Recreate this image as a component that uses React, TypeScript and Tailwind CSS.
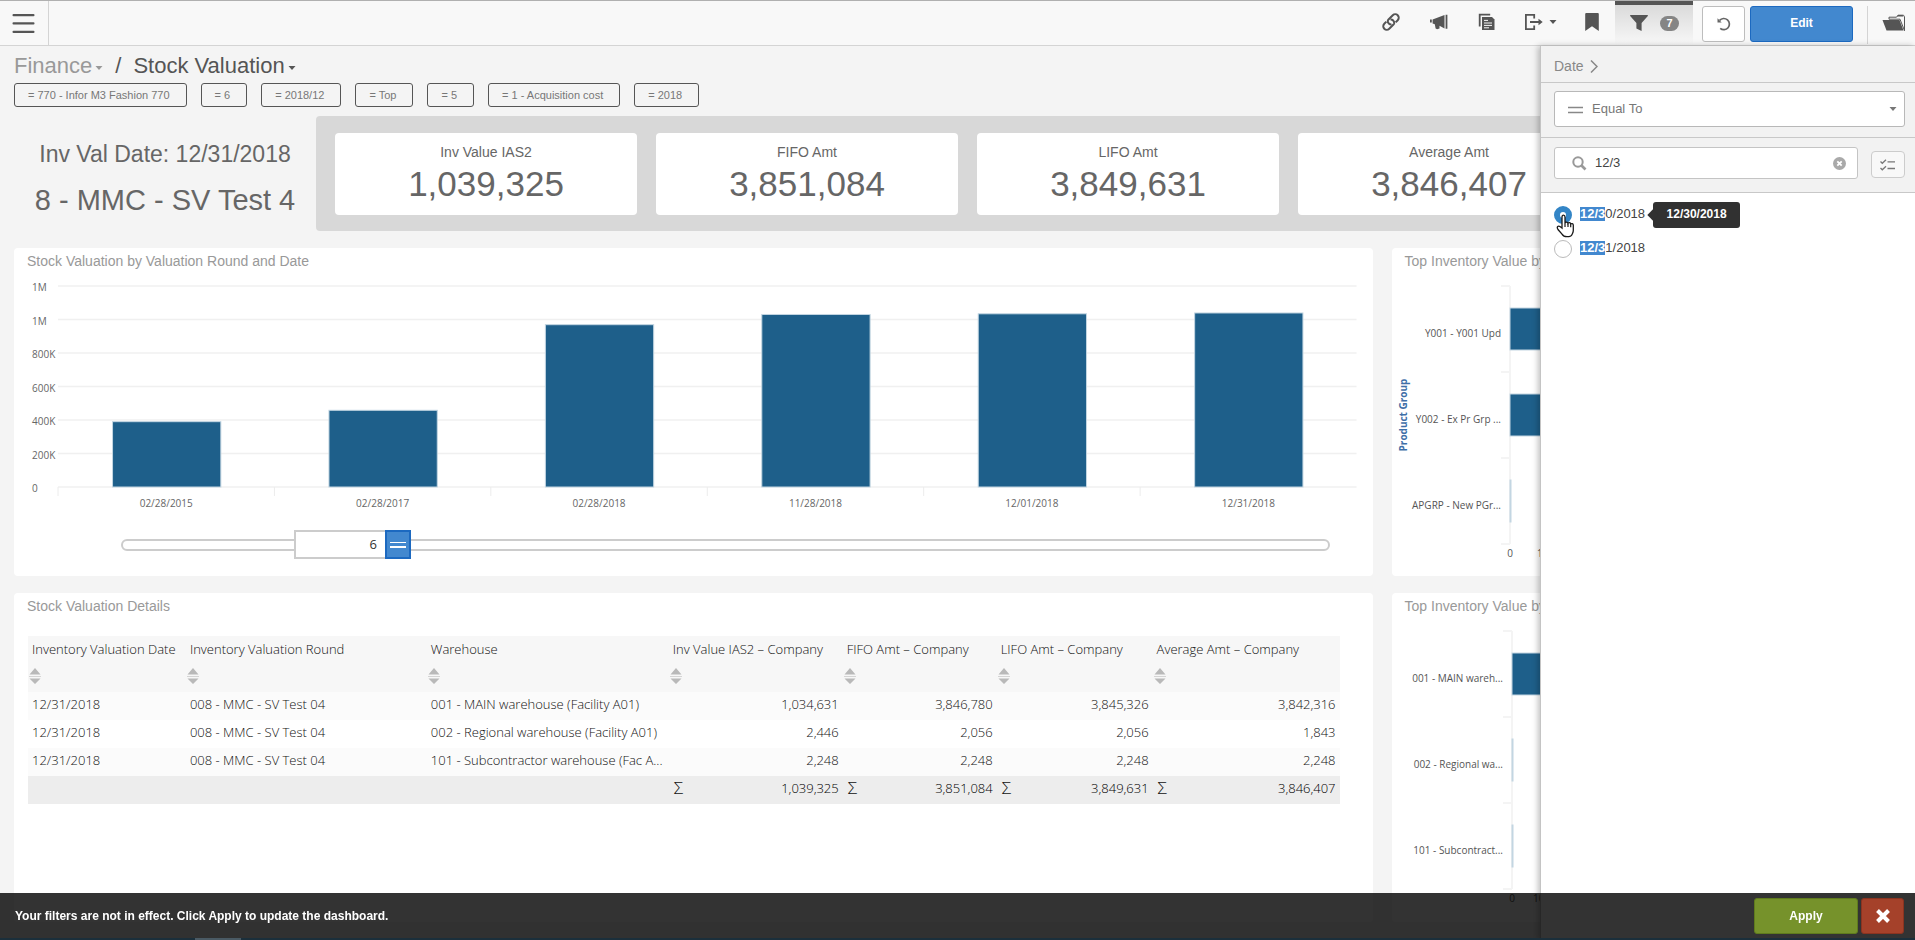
import { useState } from "react";

const filters = [
  "= 770 - Infor M3 Fashion 770",
  "= 6",
  "= 2018/12",
  "= Top",
  "= 5",
  "= 1 - Acquisition cost",
  "= 2018",
];

const kpis = [
  { label: "Inv Value IAS2", value: "1,039,325" },
  { label: "FIFO Amt", value: "3,851,084" },
  { label: "LIFO Amt", value: "3,849,631" },
  { label: "Average Amt", value: "3,846,407" },
];

const rounds = [
  { date: "02/28/2015", value: 390 },
  { date: "02/28/2017", value: 458 },
  { date: "02/28/2018", value: 969 },
  { date: "11/28/2018", value: 1030 },
  { date: "12/01/2018", value: 1034 },
  { date: "12/31/2018", value: 1039 },
];

const ticks = ["1M", "1M", "800K", "600K", "400K", "200K", "0"];

const columns = [
  { title: "Inventory Valuation Date", width: "w-[12.04%]" },
  { title: "Inventory Valuation Round", width: "w-[18.37%]" },
  { title: "Warehouse", width: "w-[18.45%]" },
  { title: "Inv Value IAS2 – Company", width: "w-[13.26%]" },
  { title: "FIFO Amt – Company", width: "w-[11.74%]" },
  { title: "LIFO Amt – Company", width: "w-[11.89%]" },
  { title: "Average Amt – Company", width: "w-[14.25%]" },
];

const rows = [
  ["12/31/2018", "008 - MMC - SV Test 04", "001 - MAIN warehouse (Facility A01)", "1,034,631", "3,846,780", "3,845,326", "3,842,316"],
  ["12/31/2018", "008 - MMC - SV Test 04", "002 - Regional warehouse (Facility A01)", "2,446", "2,056", "2,056", "1,843"],
  ["12/31/2018", "008 - MMC - SV Test 04", "101 - Subcontractor warehouse (Fac A...", "2,248", "2,248", "2,248", "2,248"],
];

const totals = ["1,039,325", "3,851,084", "3,849,631", "3,846,407"];

function Caret({ className = "" }: { className?: string }) {
  return (
    <svg width="8" height="4" viewBox="0 0 8 4" fill="currentColor" className={className}>
      <path d="M0.5 0h7L4 4z" />
    </svg>
  );
}

function Header() {
  return (
    <header className="flex h-[46px] items-stretch border-t border-b border-t-[#b0b0b0] border-b-[#d4d4d4] bg-[#f8f8f8] text-[#555]">
      <button type="button" aria-label="Menu" className="flex w-[49px] items-center border-r border-[#d4d4d4] pl-3">
        <svg width="23" height="21" fill="currentColor">
          <rect x="0.5" y="1" width="22" height="2.2" rx="1" />
          <rect x="0.5" y="9.3" width="22" height="2.2" rx="1" />
          <rect x="0.5" y="17.8" width="22" height="2.2" rx="1" />
        </svg>
      </button>

      <div className="ml-auto flex items-center pb-0.5">
        <button type="button" aria-label="Copy link" className="mr-7">
          <svg width="20" height="20" viewBox="0 0 20 20" fill="none" stroke="currentColor" strokeWidth="2">
            <g transform="rotate(-45 10 10)">
              <path d="M8.6 12.2A3.400 3.400 0 0 1 8.600 6.900Q9.300 6.500 10 6.500h6a3.500 3.500 0 0 1 0 7h-3" />
              <path d="M11.400 7.800a3.400 3.400 0 0 1 0 5.300Q10.700 13.500 10 13.500H4a3.500 3.500 0 0 1 0-7h3" />
            </g>
          </svg>
        </button>
        <button type="button" aria-label="Announce" className="mr-7">
          <svg width="20" height="20" viewBox="0 0 20 20" fill="currentColor">
            <path d="M1 7.5h1.800v3H1zM3.600 7.600L15.500 3v13.400l-5-2.600v2.600l-2.400.8-1.500-.8-.8-4.200-2.200-.7zM16.600 2.700h1.800v14h-1.800z" />
          </svg>
        </button>
        <button type="button" aria-label="Copy" className="mr-6">
          <svg width="20" height="20" viewBox="0 0 20 20">
            <path d="M2.700 14.500V2.700h10.500" fill="none" stroke="currentColor" strokeWidth="1.8" />
            <path d="M5 5h10l2.500 2.500V18H5z" fill="currentColor" />
            <path d="M7 8.400h4M7 11h8M7 13.400h8M7 15.800h5" stroke="#f8f8f8" strokeWidth="1" />
          </svg>
        </button>
        <button type="button" aria-label="Export" className="mr-7 flex items-center gap-1">
          <svg width="24" height="20" viewBox="0 0 24 20" fill="none" stroke="currentColor" strokeWidth="1.8">
            <path d="M13.200 6.500V2.900H4.900v14.200h8.300v-3.600M9 10h10" />
            <path d="M17.500 6.700l4.200 3.300-4.200 3.300z" fill="currentColor" stroke="none" />
          </svg>
          <Caret />
        </button>
        <button type="button" aria-label="Bookmark" className="mr-4">
          <svg width="14" height="18" fill="currentColor">
            <path d="M1.200 0h11.600q1 0 1 1v17L7 13.200 0.200 18V1q0-1 1-1z" />
          </svg>
        </button>
      </div>

      <button type="button" aria-label="Filters" className="flex w-[78px] items-center border-t-4 border-[#555] bg-linear-to-b from-[#dadada] to-[#f8f8f8] pb-1 pl-[15px]">
        <svg width="18" height="16" fill="currentColor">
          <path d="M0.400 0h17.200q.6.6 0 1.300L11.600 8v8L6.400 13.600V8L.4 1.300q-.6-.7 0-1.300z" />
        </svg>
        <span className="ml-3 h-[15px] w-[19px] rounded-full bg-[#858585] text-center text-[11px] leading-[15px] font-bold text-white">7</span>
      </button>
      <button type="button" aria-label="Undo" className="ml-[9px] mt-[5px] flex h-9 w-[43px] items-center justify-center rounded-[3px] border border-[#bdbdbd] bg-white">
        <svg width="14" height="14" viewBox="0 0 14 14" fill="none" stroke="#666" strokeWidth="1.7">
          <path d="M2.600 3.400A5.600 5.600 0 1 1 3.200 11.400" />
          <path d="M0.500 1.200v4.200h4.200z" fill="#666" stroke="none" />
        </svg>
      </button>
      <button type="button" className="ml-[5px] mt-[5px] h-9 w-[103px] rounded-[3px] border border-[#1c69c0] bg-[#4288cf] pb-0.5 text-[12px] font-bold text-white">
        Edit
      </button>
      <div className="ml-[14px] mt-[5px] h-[38px] border-l border-[#d4d4d4]" />
      <button type="button" aria-label="Open folder" className="ml-[14px] mr-[9px]">
        <svg width="24" height="18" viewBox="0 0 24 18" fill="currentColor">
          <path d="M0.500 6h17l4 10.500H4.500z" />
          <path d="M7 5.200V3.200h7.500l1.500-2h5.500l1 1.500v14l-4.500-11.500z" fill="none" stroke="currentColor" strokeWidth="1" />
          <path d="M15 2.600l1-1.700h4.500l1 1.700z" />
        </svg>
      </button>
    </header>
  );
}

function RoundsChart() {
  const [count, setCount] = useState("6");
  const step = 33.5;

  return (
    <section className="rounded bg-white pt-[3px] pb-[17px]">
      <h2 className="pl-[13px] text-[14px] leading-5 text-[#999]">Stock Valuation by Valuation Round and Date</h2>
      <div className="mr-4 ml-11">
        <svg width="100%" height="240" className="block overflow-visible font-['Open_Sans',sans-serif] text-[10px]" fill="#666">
          {ticks.map((t, i) => (
            <g key={i}>
              <line x1="0" x2="100%" y1={15 + i * step} y2={15 + i * step} stroke="#f0f0f0" strokeWidth="1.3" />
              <text x="-26" y={20 + i * step}>{t}</text>
            </g>
          ))}
          {rounds.map((r, i) => {
            const h = (r.value / 200) * step;
            return (
              <g key={r.date}>
                <line x1={`${(i * 100) / 6}%`} x2={`${(i * 100) / 6}%`} y1="216" y2="225" stroke="#ececec" />
                <rect x={`${(i * 100) / 6 + 4.2}%`} width="8.34%" y={216 - h} height={h} fill="#1e5f8a" stroke="#c3d6e2" strokeWidth="1" />
                <text x={`${((i + 0.5) * 100) / 6}%`} y="236" textAnchor="middle">{r.date}</text>
              </g>
            );
          })}
        </svg>
      </div>
      <div className="relative mt-[19px] mr-[43px] ml-[107px] flex h-[29px] items-center">
        <input
          type="range"
          aria-label="Number of rounds"
          min="1"
          max="30"
          value={Number(count) || 1}
          onChange={(e) => setCount(e.target.value)}
          className="h-3 w-full appearance-none rounded-full border-2 border-[#ccc] bg-white [&::-webkit-slider-thumb]:appearance-none"
        />
        <div className="absolute top-0 left-[14.3%] flex h-[29px]">
          <input
            type="text"
            aria-label="Rounds shown"
            value={count}
            onChange={(e) => setCount(e.target.value)}
            className="w-[91px] border-2 border-r-0 border-[#ccc] bg-white pr-2 text-right font-['Open_Sans',sans-serif] text-[13px] text-[#333]"
          />
          <button type="button" aria-label="Drag" className="flex w-[26px] flex-col items-center justify-center gap-[3px] border-2 border-[#1c69c0] bg-[#4288cf]">
            <span className="h-px w-4 bg-white" />
            <span className="h-0.5 w-4 bg-white" />
          </button>
        </div>
      </div>
    </section>
  );
}

interface TopChartProps {
  labels: string[];
  bars: string[];
  axis: number;
  next: string;
  nextX: number;
  legend?: string;
}

function TopChart({ labels, bars, axis, next, nextX, legend }: TopChartProps) {
  return (
    <section className="overflow-hidden rounded bg-white pt-[3px]">
      <h2 className="truncate pl-[13px] text-[14px] leading-5 text-[#999]">Top Inventory Value by {legend ?? "Warehouse"}</h2>
      <svg width="100%" height="300" className="block font-['Open_Sans',sans-serif] text-[10px]" fill="#555">
        <line x1={axis} x2={axis} y1="15" y2="273" stroke="#f4f4f4" strokeWidth="2" />
        {[15, 101, 187, 273].map((y) => (
          <line key={y} x1={axis - 9} x2={axis} y1={y} y2={y} stroke="#f4f4f4" strokeWidth="2" />
        ))}
        {labels.map((label, i) => (
          <g key={label}>
            <rect x={axis} y={37 + i * 86} width={bars[i]} height="42" fill="#1e5f8a" stroke="#c3d6e2" />
            <text x={axis - 9} y={66 + i * 86} textAnchor="end">{label}</text>
          </g>
        ))}
        <text x={axis} y="286" textAnchor="middle">0</text>
        <text x={nextX} y="286">{next}</text>
        {legend && (
          <text transform="translate(15 144) rotate(-90)" textAnchor="middle" fontWeight="700" fill="#3f6fa8">
            {legend}
          </text>
        )}
      </svg>
    </section>
  );
}

function DetailsTable() {
  return (
    <section className="rounded bg-white pt-[3px]">
      <h2 className="pl-[13px] text-[14px] leading-5 text-[#999]">Stock Valuation Details</h2>
      <div className="mt-5 mr-[33px] ml-[14px]">
        <table className="w-full table-fixed border-collapse font-['Open_Sans',sans-serif] text-[13px] text-[#111]">
          <thead>
            <tr className="h-14 bg-[#f7f7f7] text-left align-top">
              {columns.map((c) => (
                <th key={c.title} scope="col" className={`${c.width} p-0 pt-[3px] font-light whitespace-nowrap`}>
                  <span className="block pl-1 leading-5">{c.title}</span>
                  <button type="button" aria-label={`Sort by ${c.title}`} className="mt-2 ml-px block">
                    <svg width="12" height="18" fill="#b9b9b9">
                      <path d="M6 1l5.500 6.500H0.500zM0.500 11.500h11L6 17z" />
                      <path d="M0 9h12v1H0z" fill="#d4d4d4" />
                    </svg>
                  </button>
                </th>
              ))}
            </tr>
          </thead>
          <tbody>
            {rows.map((row, r) => (
              <tr key={r} className="h-7 odd:bg-[#fbfbfb]">
                {row.map((cell, i) => (
                  <td key={i} className={`pt-0 pb-1 pl-1 align-top leading-6 font-light whitespace-nowrap ${i > 2 ? "pr-1 text-right" : ""}`}>
                    {cell}
                  </td>
                ))}
              </tr>
            ))}
          </tbody>
          <tfoot>
            <tr className="h-7 bg-[#ededed]">
              <td colSpan={3} />
              {totals.map((t) => (
                <td key={t} className="pt-0 pr-1 pb-1 pl-[5px] align-top leading-6">
                  <div className="flex justify-between">
                    <span className="text-[17px] font-light">Σ</span>
                    <span className="font-light text-black">{t}</span>
                  </div>
                </td>
              ))}
            </tr>
          </tfoot>
        </table>
      </div>
    </section>
  );
}

function FilterPanel() {
  const [search, setSearch] = useState("12/3");
  const [selected, setSelected] = useState("0/2018");

  return (
    <aside className="absolute top-[46px] right-0 bottom-0 w-[375px] border-l border-[#c4c4c4] bg-white text-[13px] shadow-[-2px_0_6px_rgba(0,0,0,0.25)]">
      <div className="bg-[#f2f2f2]">
        <div className="flex h-[37px] items-center gap-1.5 border-b border-[#c8c8c8] pt-1 pl-[13px] text-[14px] text-[#888]">
          <a href="#date">Date</a>
          <svg width="8" height="13" fill="none" stroke="currentColor" strokeWidth="1.5">
            <path d="M1 0.500l6 6-6 6" />
          </svg>
        </div>
        <div className="border-b border-[#c8c8c8] pt-2 pr-[10px] pb-[10px] pl-[13px]">
          <div className="relative">
            <select aria-label="Operator" className="h-9 w-full appearance-none rounded-[3px] border border-[#b8b8b8] bg-white pl-[37px] text-[#777]">
              <option>Equal To</option>
              <option>Not Equal To</option>
            </select>
            <svg width="15" height="8" className="pointer-events-none absolute top-[15px] left-[14px]" stroke="#888" strokeWidth="1.6">
              <path d="M0 1.500h15M0 6.500h15" />
            </svg>
            <Caret className="pointer-events-none absolute top-4 right-2 text-[#777]" />
          </div>
        </div>
        <div className="flex h-[55px] items-start border-b border-[#c8c8c8] pt-[9px] pr-[10px] pl-[13px]">
          <div className="flex h-8 flex-1 items-center rounded-[3px] border border-[#c4c4c4] bg-white pr-[11px] pl-[17px]">
            <svg width="15" height="15" fill="none" stroke="#999">
              <circle cx="6" cy="6" r="4.700" strokeWidth="2" />
              <path d="M9.500 9.500l4 4" strokeWidth="2.600" />
            </svg>
            <input
              type="text"
              aria-label="Search values"
              value={search}
              onChange={(e) => setSearch(e.target.value)}
              className="ml-2 min-w-0 flex-1 text-[#444] outline-none"
            />
            <button type="button" aria-label="Clear search" onClick={() => setSearch("")}>
              <svg width="13" height="13" viewBox="0 0 13 13">
                <circle cx="6.500" cy="6.500" r="6.500" fill="#a9a9a9" />
                <path d="M4.300 4.300l4.400 4.400M8.700 4.300l-4.400 4.400" stroke="#fff" strokeWidth="1.800" />
              </svg>
            </button>
          </div>
          <button type="button" aria-label="Select mode" className="mt-1 ml-[13px] flex h-[27px] w-[34px] items-center justify-center rounded-sm border border-[#ccc] bg-[#f8f8f8]">
            <svg width="16" height="12" fill="none" stroke="#777" strokeWidth="1.300">
              <path d="M0.500 2.500l1.800 1.800L6 0.800M0.500 9l1.800 1.800L6 7.300M7.500 2.800H15M7.500 9.500H15" />
            </svg>
          </button>
        </div>
      </div>

      <div className="relative flex flex-col gap-4 pt-[13px] pl-[13px]">
        {["0/2018", "1/2018"].map((rest) => (
          <div key={rest} className="flex h-[18px] items-center">
            <label className="flex items-center gap-2 text-[#444]">
              <input
                type="radio"
                name="date"
                checked={selected === rest}
                onChange={() => setSelected(rest)}
                className="h-[18px] w-[18px] appearance-none rounded-full border border-[#bbb] bg-white checked:border-6 checked:border-[#3385c6]"
              />
              <span className="pb-0.5 leading-[14px]">
                <span className="inline-block bg-[#4288cf] font-bold text-white">12/3</span>
                {rest}
              </span>
            </label>
            {rest === "0/2018" && (
              <span role="tooltip" className="relative ml-2 h-[26px] w-[87px] rounded-[3px] bg-[#313131] text-center text-[12px] leading-[25px] font-bold text-white">
                <span className="absolute top-[9px] -left-1 h-2 w-2 rotate-45 bg-[#313131]" />
                12/30/2018
              </span>
            )}
          </div>
        ))}
        {/* hand pointer over the first option */}
        <svg width="19" height="24" viewBox="0 0 19 24" className="pointer-events-none absolute top-[21px] left-[15px]">
          <path
            d="M6 14V3.200C6 1.900 6.700 1.200 7.500 1.200S9 1.900 9 3.200V9c.3-1.200 2.700-1.200 3 .3.500-1 2.500-.8 2.700.7.700-.8 2.600-.4 2.600 1.300v5.200c0 2-.8 2.800-1.400 4.200-.6 1.500-2 2-4.900 2-2.700 0-4-.8-5-2.600L2 15.500c-.8-1.300-1.200-2.200-.3-3 1-.9 2.200-.4 4.300 1.500z"
            fill="#fff"
            stroke="#1a1a1a"
            strokeWidth="1.300"
          />
          <path d="M9 9v4M12 9.500v3.500M14.700 10.200v3" stroke="#1a1a1a" strokeWidth="1.200" />
        </svg>
      </div>
    </aside>
  );
}

function ApplyBar() {
  return (
    <footer className="fixed inset-x-0 bottom-0">
      <div className="flex h-[45px] items-center bg-black/80 pr-[11px] pl-[15px] text-[12px] font-bold text-white">
        <p>Your filters are not in effect. Click Apply to update the dashboard.</p>
        <button type="button" className="ml-auto h-9 w-[104px] rounded-[3px] border border-[#5f7b1d] bg-[#76922b]">
          Apply
        </button>
        <button type="button" aria-label="Dismiss" className="ml-[3px] flex h-9 w-[43px] items-center justify-center rounded-[3px] border border-[#8b3320] bg-[#a5412a]">
          <svg width="14" height="14" stroke="currentColor" strokeWidth="4">
            <path d="M1.500 1.500l11 11M12.500 1.500l-11 11" />
          </svg>
        </button>
      </div>
      <div className="h-0.5 bg-[#1b2f3b] pl-[195px]">
        <div className="h-full w-[46px] bg-[#4a5a64]" />
      </div>
    </footer>
  );
}

export default function App() {
  return (
    <div className="relative min-h-screen overflow-hidden bg-[#f4f4f4] font-['Liberation_Sans',Arial,sans-serif]">
      <Header />
      <main className="px-[14px] pt-[5px] pb-[18px]">
        <nav className="flex items-center text-[22px] leading-[30px] text-[#555]">
          <a href="#finance" className="flex items-center text-[#999]">
            Finance
            <Caret className="mt-1 ml-[3px]" />
          </a>
          <span className="mx-3">/</span>
          <a href="#stock" className="flex items-center">
            Stock Valuation
            <Caret className="mt-1 ml-[3px]" />
          </a>
        </nav>
        <div className="mt-0.5 flex gap-[14px]">
          {filters.map((f) => (
            <button key={f} type="button" className="h-6 rounded-[3px] border border-[#555] pr-4 pl-[13px] text-[11px] text-[#777]">
              {f}
            </button>
          ))}
        </div>

        <div className="mt-[9px] flex">
          <div className="w-[302px] shrink-0 pt-5 text-center text-[#666]">
            <p className="text-[23px] leading-9">Inv Val Date: 12/31/2018</p>
            <p className="mt-2 text-[29px] leading-10">8 - MMC - SV Test 4</p>
          </div>
          <div className="flex min-w-0 flex-1 gap-[19px] rounded bg-[#d8d8d8] px-[19px] pt-[17px] pb-4">
            {kpis.map((k) => (
              <div key={k.label} className="h-[82px] w-[302px] shrink-0 rounded bg-white pt-[9px] text-center text-[#666]">
                <p className="text-[14px] leading-5">{k.label}</p>
                <p className="mt-0.5 text-[35px] leading-10">{k.value}</p>
              </div>
            ))}
          </div>
        </div>

        <div className="mt-[17px] grid grid-cols-[minmax(0,8fr)_minmax(0,3fr)] grid-rows-[auto_329px] gap-x-[19px] gap-y-[17px]">
          <RoundsChart />
          <TopChart
            labels={["Y001 - Y001 Upd", "Y002 - Ex Pr Grp ...", "APGRP - New PGr..."]}
            bars={["60%", "40%", "1"]}
            axis={118}
            next="1M"
            nextX={145}
            legend="Product Group"
          />
          <DetailsTable />
          <TopChart
            labels={["001 - MAIN wareh...", "002 - Regional wa...", "101 - Subcontract..."]}
            bars={["60%", "1", "1"]}
            axis={120}
            next="100K"
            nextX={141}
          />
        </div>
      </main>
      <FilterPanel />
      <ApplyBar />
    </div>
  );
}
